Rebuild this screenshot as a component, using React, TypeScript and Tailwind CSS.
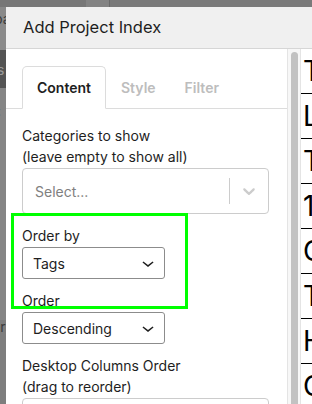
import React from "react";

const font = { fontFamily: "Inter, 'Liberation Sans', sans-serif" };

function Chevron({ className }: { className?: string }) {
  return (
    <svg viewBox="0 0 24 24" width="24" height="24" className={className}>
      <path d="M17.5 11.6L12 16l-5.5-4.4.9-1.2L12 14l4.6-3.6 1 1.2z" fill="currentColor" />
    </svg>
  );
}

function NativeSelect({ value }: { value: string }) {
  return (
    <div className="flex h-[32px] w-[143px] items-center justify-between rounded-[3px] border border-[#8c8c8c] bg-white pl-[10px] pr-[4px] text-[14px] text-[#1e1e1e]">
      <span>{value}</span>
      <Chevron className="h-[24px] w-[24px] text-[#1e1e1e]" />
    </div>
  );
}

export default function App() {
  const rows = ["Title", "Location", "Type", "100", "Client", "Tags", "Hours", "Category"];
  return (
    <div className="relative flex h-[404px] w-[312px] flex-col overflow-hidden bg-[#7a7a7a]" style={font}>
      {/* page behind overlay: top strip */}
      <div className="flex h-[7px] shrink-0">
        <div className="w-[86px] bg-[#777777]" />
        <div className="w-[24px] border-r border-[#6a6a6a] bg-[#838383]" />
        <div className="flex-1 bg-[#7a7a7a]" />
      </div>
      <div className="flex min-h-0 flex-1">
        {/* page behind overlay: left strip */}
        <div className="flex w-[6px] shrink-0 flex-col overflow-hidden text-[14px] leading-none">
          <div className="h-[43px] bg-[#8a8a8a] pt-[5px] text-[#3a3a3a]">
            <span className="-ml-[6px]">pa</span>
          </div>
          <div className="h-[38px] bg-[#545454] pt-[13px] text-[#9a9a9a]">
            <span className="-ml-[3px]">s</span>
          </div>
          <div className="h-[232px] bg-[#858585] pt-[16px] text-[#3a3a3a]">
            <span className="-ml-[3px]">:</span>
          </div>
          <div className="flex-1 bg-[#7e7e7e] pt-[0px] text-[#3a3a3a]">
            <span className="-ml-[8px]">er</span>
          </div>
        </div>

        {/* modal */}
        <div className="flex min-w-0 flex-1 flex-col bg-white">
          <div className="flex h-[42px] shrink-0 items-center border-b border-[#d6d6d6] bg-[#f0f0f0] pl-[17px] text-[16.5px] text-[#1e1e1e]">
            Add Project Index
          </div>
          <div className="flex min-h-0 flex-1">
            {/* settings pane */}
            <div className="w-[281px] shrink-0 overflow-hidden pt-[17px]">
              <div className="flex border-b border-[#dcdcdc] pl-[16px] text-[14px] font-semibold">
                <div className="-mb-px flex h-[43px] w-[84px] items-center justify-center rounded-t-[5px] border border-b-white border-[#dcdcdc] bg-white text-[#1e1e1e]">
                  Content
                </div>
                <div className="flex h-[42px] items-center px-[15px] text-[#bdbdbd]">Style</div>
                <div className="flex h-[42px] items-center px-[14px] text-[#bdbdbd]">Filter</div>
              </div>
              <div className="pl-[16px] pr-[18px] pt-[16px] text-[14px] leading-[21px] text-[#1e1e1e]">
                <div className="mb-[11px]">
                  <div className="mb-px">
                    Categories to show
                    <br />
                    (leave empty to show all)
                  </div>
                  <div className="flex h-[46px] items-center rounded-[4px] border border-[#cccccc] bg-white">
                    <span className="flex-1 pl-[12px] text-[#808080]">Select...</span>
                    <span className="h-[26px] w-px bg-[#cccccc]" />
                    <span className="flex w-[38px] items-center justify-center text-[#cccccc]">
                      <svg viewBox="0 0 20 20" width="20" height="20" fill="currentColor">
                        <path d="M4.516 7.548c0.436-0.446 1.043-0.481 1.576 0l3.908 3.747 3.908-3.747c0.533-0.481 1.141-0.446 1.574 0 0.436 0.445 0.408 1.197 0 1.615-0.406 0.418-4.695 4.502-4.695 4.502-0.217 0.223-0.502 0.335-0.787 0.335s-0.57-0.112-0.789-0.335c0 0-4.287-4.084-4.695-4.502s-0.436-1.170 0-1.615z" />
                      </svg>
                    </span>
                  </div>
                </div>
                <div className="mb-[11px]">
                  <div className="mb-px">Order by</div>
                  <NativeSelect value="Tags" />
                </div>
                <div className="mb-[11px]">
                  <div className="mb-px">Order</div>
                  <NativeSelect value="Descending" />
                </div>
                <div>
                  <div className="mb-px">
                    Desktop Columns Order
                    <br />
                    (drag to reorder)
                  </div>
                  <div className="h-[60px] rounded-[4px] border border-[#cccccc] bg-white" />
                </div>
              </div>
            </div>
            {/* scrollbar */}
            <div className="w-[14px] shrink-0 border-x border-[#e4e4e4] bg-[#f7f7f7] pl-[3px] pt-[3px]">
              <div className="h-[400px] w-[7px] rounded-full bg-[#c2c2c2]" />
            </div>
            {/* preview pane */}
            <div className="min-w-0 flex-1 overflow-hidden bg-white">
              {rows.map((r, i) => (
                <div
                  key={i}
                  className="flex h-[45px] items-center whitespace-nowrap border-b border-black pl-[2px] text-[28px] leading-none text-black"
                >
                  {r}
                </div>
              ))}
            </div>
          </div>
        </div>
      </div>
      {/* highlight overlay */}
      <div className="pointer-events-none absolute left-[11px] top-[213px] h-[96px] w-[177px] border-[3px] border-[#00ff00]" />
    </div>
  );
}
